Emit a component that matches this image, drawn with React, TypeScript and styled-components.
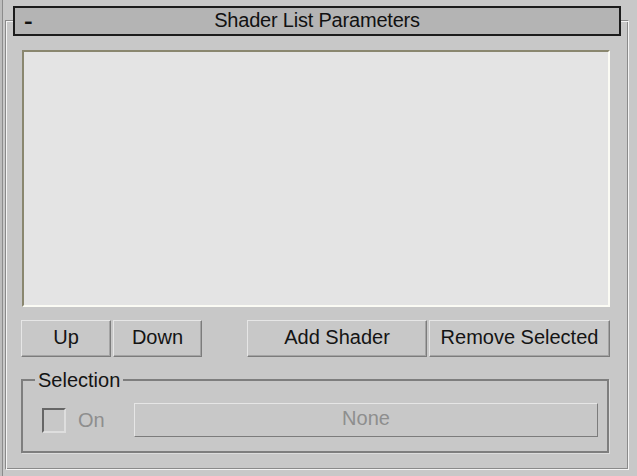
import React from "react";
import styled, { createGlobalStyle } from "styled-components";

const GlobalStyle = createGlobalStyle`
  html, body {
    margin: 0;
    padding: 0;
    background: #c8c8c8;
  }
  body {
    font-family: "Liberation Sans", Arial, sans-serif;
  }
`;

// 전체 화면, 왼쪽 가장자리 선
const Page = styled.div`
  width: 637px;
  height: 476px;
  box-sizing: border-box;
  background: #c8c8c8;
  border-left: 2px solid #bdbdbd;
  display: flex;
  overflow: hidden;
`;

const EdgeLine = styled.div`
  width: 1px;
  background: #8c8c8c;
  flex-shrink: 0;
`;

// 롤아웃 테두리 (groove)
const Rollout = styled.div`
  margin: 20px 8px 6px 2px;
  flex: 1;
  box-sizing: border-box;
  border: 1px solid;
  border-color: #8a8a8a #f4f4f4 #f4f4f4 #8a8a8a;
  box-shadow: inset 1px 1px 0 #f4f4f4, inset -1px -1px 0 #8a8a8a;
  display: flex;
  flex-direction: column;
  padding: 0 18px 13px 16px;
`;

// 제목 막대
const TitleBar = styled.div`
  margin: -15px -11px 0 -9px;
  height: 30px;
  box-sizing: border-box;
  border: 2px solid #1c1c1c;
  background: #b4b4b4;
  display: flex;
  align-items: center;
  position: relative;
  font-size: 20px;
  color: #111;
  padding-bottom: 2px;
`;

// 접기 표시
const Collapse = styled.span`
  position: absolute;
  left: 10px;
  top: 2px;
  font-weight: bold;
  transform: scaleX(1.3);
`;

const Title = styled.span`
  flex: 1;
  text-align: center;
  letter-spacing: -0.2px;
`;

const ListBox = styled.div`
  margin-top: 14px;
  height: 257px;
  box-sizing: border-box;
  border: 2px solid;
  border-color: #8a876f #fbfbf4 #fbfbf4 #8a876f;
  background: #e4e4e4;
`;

const ButtonRow = styled.div`
  display: flex;
  margin-top: 13px;
  margin-left: -1px;
  gap: 2px;
`;

const Spacer = styled.div`
  flex-grow: 1;
`;

const Button = styled.button<{ $w: number; $disabled?: boolean }>`
  width: ${(p) => p.$w}px;
  height: 37px;
  box-sizing: border-box;
  padding: 0 0 3px;
  background: #c8c8c8;
  border: 1px solid;
  border-color: #e6e6e6 #7c7c7c #7c7c7c #e6e6e6;
  box-shadow: inset -1px -1px 0 #a4a4a4;
  font-family: "Liberation Sans", Arial, sans-serif;
  font-size: 20px;
  color: ${(p) => (p.$disabled ? "#8e8e8e" : "#141414")};
  text-align: center;
`;

// 선택 그룹 상자
const Group = styled.fieldset`
  margin: 14px 1px 0 -1px;
  padding: 14px 9px 14px 19px;
  border: 2px solid #7e7e7e;
  box-shadow: 1px 1px 0 #dcdcdc;
  display: flex;
  align-items: center;
  gap: 12px;
`;

const Legend = styled.legend`
  font-size: 20px;
  color: #141414;
  padding: 0 3px;
  margin-left: -7px;
  line-height: 18px;
`;

const CheckBox = styled.div`
  width: 24px;
  height: 25px;
  box-sizing: border-box;
  border: 2px solid;
  border-color: #666 #dedede #dedede #666;
  background: #c8c8c8;
  flex-shrink: 0;
`;

const CheckLabel = styled.span`
  font-size: 20px;
  color: #8e8e8e;
  width: 44px;
`;

const NoneButton = styled(Button)`
  flex: 1;
  height: 34px;
  border-color: #e6e6e6 #7c7c7c #7c7c7c #e6e6e6;
  box-shadow: none;
`;

const App = () => {
  return (
    <>
      <GlobalStyle />
      <Page>
        <EdgeLine />
        <Rollout>
          <TitleBar>
            <Collapse>-</Collapse>
            <Title>Shader List Parameters</Title>
          </TitleBar>
          <ListBox />
          <ButtonRow>
            <Button $w={90}>Up</Button>
            <Button $w={89}>Down</Button>
            <Spacer />
            <Button $w={180}>Add Shader</Button>
            <Button $w={181}>Remove Selected</Button>
          </ButtonRow>
          <Group>
            <Legend>Selection</Legend>
            <CheckBox />
            <CheckLabel>On</CheckLabel>
            <NoneButton $w={0} $disabled>
              None
            </NoneButton>
          </Group>
        </Rollout>
      </Page>
    </>
  );
};

export default App;
